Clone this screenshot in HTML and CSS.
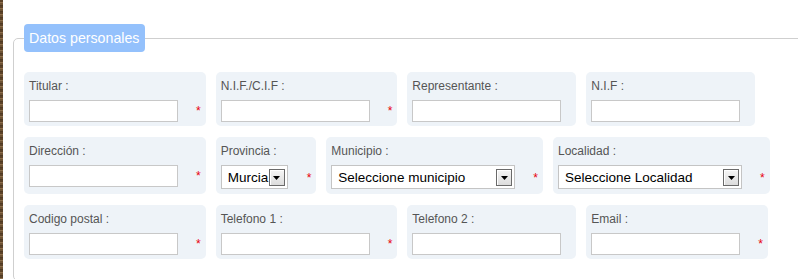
FILE: index.html
```html
<!DOCTYPE html>
<html lang="es">
<head>
<meta charset="utf-8">
<title>Datos personales</title>
<link rel="stylesheet" href="styles.css">
</head>
<body>
<div class="page">
  <form class="form">
    <fieldset class="panel">
      <legend class="panel-title">Datos personales</legend>

      <div class="row">
        <div class="field">
          <label class="field-label">Titular :</label>
          <div class="field-control"><input class="text-input" type="text"><span class="req">*</span></div>
        </div>
        <div class="field">
          <label class="field-label">N.I.F./C.I.F :</label>
          <div class="field-control"><input class="text-input" type="text"><span class="req">*</span></div>
        </div>
        <div class="field field--plain">
          <label class="field-label">Representante :</label>
          <div class="field-control"><input class="text-input" type="text"></div>
        </div>
        <div class="field field--plain">
          <label class="field-label">N.I.F :</label>
          <div class="field-control"><input class="text-input" type="text"></div>
        </div>
      </div>

      <div class="row">
        <div class="field">
          <label class="field-label">Dirección :</label>
          <div class="field-control"><input class="text-input" type="text"><span class="req">*</span></div>
        </div>
        <div class="field">
          <label class="field-label">Provincia :</label>
          <div class="field-control">
            <span class="select-wrap">
              <select class="select select--small"><option>Murcia</option></select>
              <span class="select-btn"><svg width="7" height="4" viewBox="0 0 7 4"><polygon points="0,0 7,0 3.5,4" fill="#000"/></svg></span>
            </span>
            <span class="req req--select">*</span>
          </div>
        </div>
        <div class="field">
          <label class="field-label">Municipio :</label>
          <div class="field-control">
            <span class="select-wrap">
              <select class="select select--wide"><option>Seleccione municipio</option></select>
              <span class="select-btn"><svg width="7" height="4" viewBox="0 0 7 4"><polygon points="0,0 7,0 3.5,4" fill="#000"/></svg></span>
            </span>
            <span class="req">*</span>
          </div>
        </div>
        <div class="field">
          <label class="field-label">Localidad :</label>
          <div class="field-control">
            <span class="select-wrap">
              <select class="select select--wide"><option>Seleccione Localidad</option></select>
              <span class="select-btn"><svg width="7" height="4" viewBox="0 0 7 4"><polygon points="0,0 7,0 3.5,4" fill="#000"/></svg></span>
            </span>
            <span class="req">*</span>
          </div>
        </div>
      </div>

      <div class="row">
        <div class="field">
          <label class="field-label">Codigo postal :</label>
          <div class="field-control"><input class="text-input" type="text"><span class="req">*</span></div>
        </div>
        <div class="field">
          <label class="field-label">Telefono 1 :</label>
          <div class="field-control"><input class="text-input" type="text"><span class="req">*</span></div>
        </div>
        <div class="field field--plain">
          <label class="field-label">Telefono 2 :</label>
          <div class="field-control"><input class="text-input" type="text"></div>
        </div>
        <div class="field">
          <label class="field-label">Email :</label>
          <div class="field-control"><input class="text-input" type="text"><span class="req">*</span></div>
        </div>
      </div>
    </fieldset>
  </form>
</div>
</body>
</html>
```

FILE: styles.css
```css
html, body {
  margin: 0;
  padding: 0;
  overflow: hidden;
  background: #fff;
}

body {
  font-family: "Liberation Sans", Arial, sans-serif;
}

.page {
  min-height: 279px;
  padding: 24px 0 0 13px;
  box-sizing: border-box;
  background-image: repeating-linear-gradient(180deg, #5c4329 0 2px, #8d6f4c 2px 3px, #6e5335 3px 5px, #4f3a24 5px 6px);
  background-size: 3px 100%;
  background-repeat: no-repeat;
}

.form {
  margin: 0;
}

.panel {
  margin: 0;
  width: 820px;
  padding: 20px 10px 21px 10px;
  border: 1px solid #cfcfcf;
  border-radius: 5px;
  box-sizing: border-box;
}

.panel-title {
  margin: 0;
  padding: 0 6px 0 5px;
  height: 28px;
  line-height: 28px;
  background: #94c1fc;
  color: #fff;
  font-size: 14.2px;
  border-radius: 4px;
}

.row {
  display: flex;
  gap: 10px;
  margin-bottom: 11px;
}

.row:last-child {
  margin-bottom: 0;
}

.field {
  background: #eef3f8;
  border-radius: 5px;
  padding: 7px 5px 4px 5px;
}

.field--plain {
  padding-right: 15px;
}

.field-label {
  display: block;
  font-size: 12px;
  line-height: 14px;
  color: #555;
  margin-bottom: 7px;
}

.field-control {
  display: flex;
  align-items: center;
}

.text-input {
  box-sizing: border-box;
  width: 149px;
  height: 22px;
  margin: 0;
  border: 1px solid #c8c8c8;
  background: #fff;
  padding: 0 3px;
  font-family: inherit;
  font-size: 13px;
  outline: none;
}

.req {
  margin-left: 18px;
  font-size: 12px;
  line-height: 12px;
  color: #e8000b;
}

.req--select {
  margin-left: 19px;
}

.select-wrap {
  position: relative;
  display: inline-block;
  margin-bottom: 1px;
}

.select {
  display: block;
  box-sizing: border-box;
  height: 24px;
  margin: 0;
  padding: 0 0 0 6px;
  border: 1px solid #c4c4c4;
  border-radius: 0;
  background: #fff;
  color: #000;
  font-family: "Liberation Sans", Arial, sans-serif;
  font-size: 13.5px;
  -webkit-appearance: none;
  appearance: none;
  outline: none;
}

.select--small {
  width: 67px;
}

.select--wide {
  width: 184px;
}

.select-btn {
  position: absolute;
  right: 3px;
  top: 4px;
  width: 16px;
  height: 17px;
  box-sizing: border-box;
  border: 1px solid #6a6a6a;
  background: linear-gradient(#f6f6f6, #dcdcdc);
  box-shadow: inset 1px 1px 0 #fff;
  display: flex;
  align-items: center;
  justify-content: center;
  pointer-events: none;
}
```
